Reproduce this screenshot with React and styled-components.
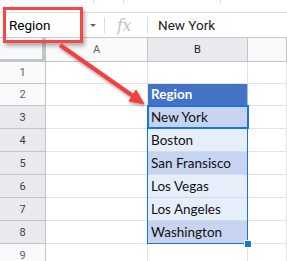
import React from "react";
import styled, { createGlobalStyle } from "styled-components";

const GlobalStyle = createGlobalStyle`
  html, body {
    margin: 0;
    background: #ffffff;
  }
  body {
    font-family: Roboto, "Liberation Sans", sans-serif;
    overflow: hidden;
  }
`;

const regions = [
    { row: 1, value: "" },
    { row: 2, value: "Region", head: true },
    { row: 3, value: "New York", band: "dark" },
    { row: 4, value: "Boston", band: "light" },
    { row: 5, value: "San Fransisco", band: "dark" },
    { row: 6, value: "Los Vegas", band: "light" },
    { row: 7, value: "Los Angeles", band: "light" },
    { row: 8, value: "Washington", band: "dark" },
    { row: 9, value: "" },
];

const bandColors = {
    dark: "#c6d4ef",
    light: "#e6eefa",
};

const App = () => {
    return (
        <Page>
            <GlobalStyle />
            <Toolbar>
                <ToolSep $gap={93} />
                <ToolSep $gap={29} />
                <ToolSep $gap={96} />
            </Toolbar>
            <FormulaBar>
                <NameBox>
                    <NameText>Region</NameText>
                    <Caret />
                </NameBox>
                <BarSep />
                <Fx>fx</Fx>
                <BarSep />
                <Formula>New York</Formula>
            </FormulaBar>
            <Sheet>
                <Corner />
                <ColHead $c={2}>A</ColHead>
                <ColHead $c={3} $active>B</ColHead>
                <ColHead $c={4} />
                {regions.map((r) => (
                    <React.Fragment key={r.row}>
                        <RowHead $r={r.row + 1} $active={r.row >= 3 && r.row <= 8}>
                            {r.row}
                        </RowHead>
                        <Cell $r={r.row + 1} $c={2} />
                        <Cell
                            $r={r.row + 1}
                            $c={3}
                            $head={r.head}
                            $bg={r.head ? "#4472c4" : bandColors[r.band]}
                        >
                            {r.value}
                        </Cell>
                        <Cell $r={r.row + 1} $c={4} />
                    </React.Fragment>
                ))}
                <Selection>
                    <FillHandle />
                </Selection>
                <ActiveCell />
            </Sheet>
            <Callout />
            <Arrow width="287" height="261" viewBox="0 0 287 261">
                <defs>
                    <filter id="arrowShadow" x="-20%" y="-20%" width="140%" height="140%">
                        <feDropShadow dx="1" dy="2" stdDeviation="1.5" floodColor="#000" floodOpacity="0.35" />
                    </filter>
                </defs>
                <g filter="url(#arrowShadow)" fill="#f2413f" stroke="#f2413f">
                    <line x1="60" y1="45" x2="133" y2="96" strokeWidth="4" />
                    <polygon points="144,104 129,101 136,90" strokeWidth="1" strokeLinejoin="round" />
                </g>
            </Arrow>
        </Page>
    );
};

export default App;

const Page = styled.div`
    position: relative;
    width: 287px;
    height: 261px;
    overflow: hidden;
    background: #ffffff;
`;

const Toolbar = styled.div`
    display: flex;
    height: 12px;
    border-bottom: 1px solid #e0e0e0;
`;

const ToolSep = styled.div`
    width: 1px;
    height: 4px;
    margin-left: ${(p) => p.$gap}px;
    background: #dadce0;
`;

const FormulaBar = styled.div`
    display: flex;
    align-items: center;
    height: 24px;
    border-bottom: 1px solid #c7c7c7;
    color: #202124;
    font-size: 13px;
`;

const NameBox = styled.div`
    display: flex;
    align-items: center;
    width: 104px;
    height: 100%;
    padding-left: 9px;
    box-sizing: border-box;
`;

const NameText = styled.span`
    flex: 1;
    font-family: Roboto, sans-serif;
    font-size: 13.5px;
    color: #000000;
`;

const Caret = styled.span`
    width: 0;
    height: 0;
    margin-right: 8px;
    border-left: 3.5px solid transparent;
    border-right: 3.5px solid transparent;
    border-top: 3.5px solid #5f6368;
`;

const BarSep = styled.div`
    width: 1px;
    height: 16px;
    background: #dadce0;
`;

const Fx = styled.div`
    width: 42px;
    padding-left: 12px;
    box-sizing: border-box;
    font-family: "DejaVu Serif", "Liberation Serif", serif;
    font-style: italic;
    font-size: 16px;
    color: #c4c4c4;
    letter-spacing: -0.5px;
`;

const Formula = styled.div`
    padding-left: 10px;
    font-family: Roboto, sans-serif;
    font-size: 13.5px;
`;

const Sheet = styled.div`
    display: grid;
    grid-template-columns: 46px 102px 100px 1fr;
    grid-template-rows: 24px 22px 22px repeat(7, 23px);
`;

const Corner = styled.div`
    grid-row: 1;
    grid-column: 1;
    background: #f8f9fa;
    border-right: 4px solid #c4c4c4;
    border-bottom: 3px solid #c4c4c4;
`;

const ColHead = styled.div`
    grid-row: 1;
    grid-column: ${(p) => p.$c};
    display: flex;
    align-items: center;
    justify-content: center;
    background: ${(p) => (p.$active ? "#e8eaed" : "#f8f9fa")};
    border-right: 1px solid #c4c4c4;
    border-bottom: 1px solid #c4c4c4;
    font-size: 11px;
    color: ${(p) => (p.$active ? "#202124" : "#5f6368")};
`;

const RowHead = styled.div`
    grid-row: ${(p) => p.$r};
    grid-column: 1;
    display: flex;
    align-items: center;
    justify-content: center;
    background: ${(p) => (p.$active ? "#e8eaed" : "#f8f9fa")};
    border-right: 1px solid #c4c4c4;
    border-bottom: 1px solid #c4c4c4;
    font-size: 11px;
    color: ${(p) => (p.$active ? "#3c4043" : "#5f6368")};
`;

const Cell = styled.div`
    grid-row: ${(p) => p.$r};
    grid-column: ${(p) => p.$c};
    display: flex;
    align-items: flex-end;
    padding: 0 0 3px 3px;
    background: ${(p) => p.$bg || "#ffffff"};
    border-right: 1px solid ${(p) => (p.$bg ? "#a8b9dc" : "#e2e3e3")};
    border-bottom: 1px solid ${(p) => (p.$bg && !p.$head ? "#d2dcf0" : "#e2e3e3")};
    font-family: Lato, "Liberation Sans", sans-serif;
    font-size: 13.5px;
    line-height: 15px;
    font-weight: ${(p) => (p.$head ? 700 : 400)};
    color: ${(p) => (p.$head ? "#ffffff" : "#111111")};
    white-space: nowrap;
`;

const Selection = styled.div`
    position: relative;
    grid-column: 3;
    grid-row: 4 / 10;
    margin: -1px 0 0 -1px;
    border: 1px solid #1a73e8;
    pointer-events: none;
`;

const FillHandle = styled.div`
    position: absolute;
    right: -5px;
    bottom: -5px;
    width: 6px;
    height: 6px;
    background: #1a73e8;
    border: 1px solid #ffffff;
`;

const ActiveCell = styled.div`
    grid-column: 3;
    grid-row: 4;
    margin: -1px -1px 0 -1px;
    border: 2px solid #1a73e8;
    pointer-events: none;
`;

const Callout = styled.div`
    position: absolute;
    left: 3px;
    top: 7px;
    width: 80px;
    height: 36px;
    box-sizing: border-box;
    border: 3px solid #f44848;
    box-shadow: 2px 3px 4px rgba(0, 0, 0, 0.3);
    pointer-events: none;
`;

const Arrow = styled.svg`
    position: absolute;
    left: 0;
    top: 0;
    pointer-events: none;
`;
